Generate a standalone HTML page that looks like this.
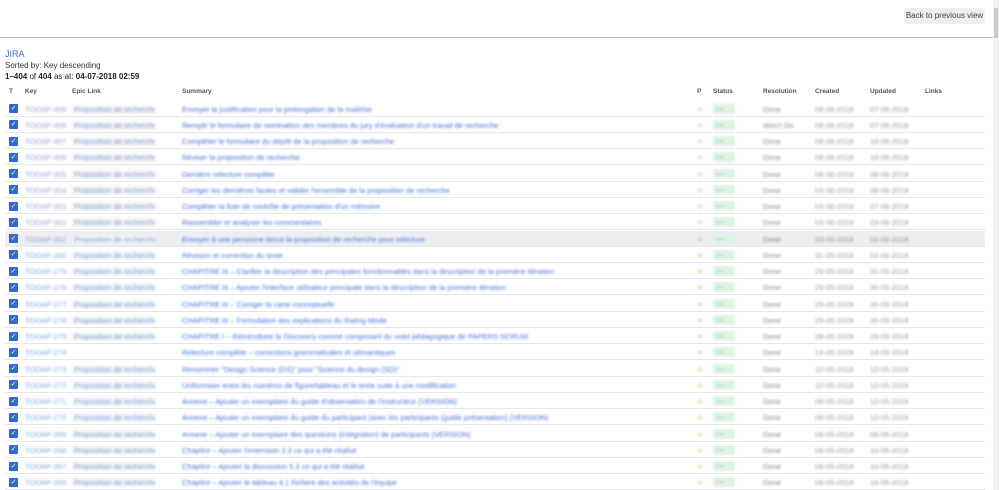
<!DOCTYPE html>
<html><head><meta charset="utf-8"><style>
*{margin:0;padding:0;box-sizing:border-box}
body{width:999px;height:490px;overflow:hidden;background:#fff;font-family:"Liberation Sans",sans-serif;position:relative}
.top{position:absolute;left:0;top:0;width:993px;height:38px;border-bottom:1px solid #b7bcc4}
.btn{position:absolute;left:904px;top:8px;width:81px;height:16px;background:#eceef1;border-radius:3px;font-size:8px;color:#344;line-height:16px;text-align:center}
.sb{position:absolute;left:993px;top:0;width:6px;height:490px;background:#f0f0f0}
.sb i{position:absolute;left:1px;top:8px;width:4px;height:30px;background:#c8c8c8}
.h1{position:absolute;left:5px;top:49px;font-size:9px;color:#3d6dc8}
.h2{position:absolute;left:5px;top:61px;font-size:8px;color:#333}
.h3{position:absolute;left:5px;top:72px;font-size:8px;color:#222}
.th{position:absolute;top:88px;font-size:6.5px;color:#555;font-weight:bold}
.row{position:absolute;left:5px;width:980px;height:16px;border-bottom:1px solid #e4e6ea;font-size:7.5px;white-space:nowrap;margin-top:1.5px}
.row.hl{background:#eceef2}
.row span{position:absolute;top:4px;filter:blur(1px)}
.cb{position:absolute;left:4px;top:3.5px;width:9px;height:9px;background:#2d6ad6;border-radius:1px;color:#fff;font-size:7px;line-height:9px;text-align:center}
.k{left:20px;color:#8aa6d8}
.e{left:67px;color:#7f9ed8;background:#f3f4f6;padding:0 2px;width:83px;overflow:hidden}
.s{left:177px;color:#4670d4}
.p{left:693px;color:#f0a060;font-weight:bold}
.st{left:708px;color:#4b8;background:#e0f2e3;padding:0 3px;width:22px;top:3px!important;height:10px}
.r{left:758px;color:#888}
.c{left:810px;color:#999}
.u{left:865px;color:#999}
</style></head><body>
<div class="top"><div class="btn">Back to previous view</div></div>
<div class="sb"><i></i></div>
<div class="h1">JIRA</div>
<div class="h2">Sorted by: Key descending</div>
<div class="h3"><b>1–404</b> of <b>404</b> as at: <b>04-07-2018 02:59</b></div>
<div class="th" style="left:9px">T</div><div class="th" style="left:25px">Key</div><div class="th" style="left:72px">Epic Link</div><div class="th" style="left:182px">Summary</div><div class="th" style="left:697px">P</div><div class="th" style="left:713px">Status</div><div class="th" style="left:763px">Resolution</div><div class="th" style="left:815px">Created</div><div class="th" style="left:870px">Updated</div><div class="th" style="left:925px">Links</div>

<div class="row" style="top:99px"><div class="cb">✓</div><span class="k">TOOAP-309</span><span class="e">Proposition de recherche</span><span class="s">Envoyer la justification pour la prolongation de la maîtrise</span><span class="p">=</span><span class="st">—</span><span class="r">Done</span><span class="c">08-06-2018</span><span class="u">07-06-2018</span></div>
<div class="row" style="top:115.3px"><div class="cb">✓</div><span class="k">TOOAP-308</span><span class="e">Proposition de recherche</span><span class="s">Remplir le formulaire de nomination des membres du jury d'évaluation d'un travail de recherche</span><span class="p">=</span><span class="st">—</span><span class="r">Won't Do</span><span class="c">08-06-2018</span><span class="u">07-06-2018</span></div>
<div class="row" style="top:131.5px"><div class="cb">✓</div><span class="k">TOOAP-307</span><span class="e">Proposition de recherche</span><span class="s">Compléter le formulaire du dépôt de la proposition de recherche</span><span class="p">=</span><span class="st">—</span><span class="r">Done</span><span class="c">08-06-2018</span><span class="u">10-06-2018</span></div>
<div class="row" style="top:147.8px"><div class="cb">✓</div><span class="k">TOOAP-306</span><span class="e">Proposition de recherche</span><span class="s">Réviser la proposition de recherche</span><span class="p">=</span><span class="st">—</span><span class="r">Done</span><span class="c">08-06-2018</span><span class="u">10-06-2018</span></div>
<div class="row" style="top:164px"><div class="cb">✓</div><span class="k">TOOAP-305</span><span class="e">Proposition de recherche</span><span class="s">Dernière relecture complète</span><span class="p">=</span><span class="st">—</span><span class="r">Done</span><span class="c">08-06-2018</span><span class="u">08-06-2018</span></div>
<div class="row" style="top:180.3px"><div class="cb">✓</div><span class="k">TOOAP-304</span><span class="e">Proposition de recherche</span><span class="s">Corriger les dernières fautes et valider l'ensemble de la proposition de recherche</span><span class="p">=</span><span class="st">—</span><span class="r">Done</span><span class="c">03-06-2018</span><span class="u">08-06-2018</span></div>
<div class="row" style="top:196.5px"><div class="cb">✓</div><span class="k">TOOAP-303</span><span class="e">Proposition de recherche</span><span class="s">Compléter la liste de contrôle de présentation d'un mémoire</span><span class="p">=</span><span class="st">—</span><span class="r">Done</span><span class="c">03-06-2018</span><span class="u">07-06-2018</span></div>
<div class="row" style="top:212.8px"><div class="cb">✓</div><span class="k">TOOAP-302</span><span class="e">Proposition de recherche</span><span class="s">Rassembler et analyser les commentaires</span><span class="p">=</span><span class="st">—</span><span class="r">Done</span><span class="c">03-06-2018</span><span class="u">03-06-2018</span></div>
<div class="row hl" style="top:229px"><div class="cb">✓</div><span class="k">TOOAP-301</span><span class="e">Proposition de recherche</span><span class="s">Envoyer à une personne tierce la proposition de recherche pour relecture</span><span class="p">=</span><span class="st">—</span><span class="r">Done</span><span class="c">03-06-2018</span><span class="u">03-06-2018</span></div>
<div class="row" style="top:245.3px"><div class="cb">✓</div><span class="k">TOOAP-300</span><span class="e">Proposition de recherche</span><span class="s">Révision et correction du texte</span><span class="p">=</span><span class="st">—</span><span class="r">Done</span><span class="c">31-05-2018</span><span class="u">03-06-2018</span></div>
<div class="row" style="top:261.5px"><div class="cb">✓</div><span class="k">TOOAP-279</span><span class="e">Proposition de recherche</span><span class="s">CHAPITRE III – Clarifier la description des principales fonctionnalités dans la description de la première itération</span><span class="p">=</span><span class="st">—</span><span class="r">Done</span><span class="c">29-05-2018</span><span class="u">31-05-2018</span></div>
<div class="row" style="top:277.8px"><div class="cb">✓</div><span class="k">TOOAP-278</span><span class="e">Proposition de recherche</span><span class="s">CHAPITRE III – Ajouter l'interface utilisateur principale dans la description de la première itération</span><span class="p">=</span><span class="st">—</span><span class="r">Done</span><span class="c">29-05-2018</span><span class="u">30-05-2018</span></div>
<div class="row" style="top:294px"><div class="cb">✓</div><span class="k">TOOAP-277</span><span class="e">Proposition de recherche</span><span class="s">CHAPITRE III – Corriger la carte conceptuelle</span><span class="p">=</span><span class="st">—</span><span class="r">Done</span><span class="c">29-05-2018</span><span class="u">30-05-2018</span></div>
<div class="row" style="top:310.3px"><div class="cb">✓</div><span class="k">TOOAP-276</span><span class="e">Proposition de recherche</span><span class="s">CHAPITRE III – Formulation des explications du Rating Mode</span><span class="p">=</span><span class="st">—</span><span class="r">Done</span><span class="c">29-05-2018</span><span class="u">30-05-2018</span></div>
<div class="row" style="top:326.5px"><div class="cb">✓</div><span class="k">TOOAP-275</span><span class="e">Proposition de recherche</span><span class="s">CHAPITRE I – Réintroduire la Discovery comme composant du volet pédagogique de PAPERS-SCRUM</span><span class="p">=</span><span class="st">—</span><span class="r">Done</span><span class="c">28-05-2018</span><span class="u">29-05-2018</span></div>
<div class="row" style="top:342.8px"><div class="cb">✓</div><span class="k">TOOAP-274</span><span class="e" style="background:none;color:#fff">.</span><span class="s">Relecture complète – corrections grammaticales et sémantiques</span><span class="p">=</span><span class="st">—</span><span class="r">Done</span><span class="c">14-05-2018</span><span class="u">14-05-2018</span></div>
<div class="row" style="top:359px"><div class="cb">✓</div><span class="k">TOOAP-273</span><span class="e">Proposition de recherche</span><span class="s">Renommer "Design Science (DS)" pour "Science du design (SD)"</span><span class="p">=</span><span class="st">—</span><span class="r">Done</span><span class="c">10-05-2018</span><span class="u">10-05-2018</span></div>
<div class="row" style="top:375.3px"><div class="cb">✓</div><span class="k">TOOAP-272</span><span class="e">Proposition de recherche</span><span class="s">Uniformiser entre les numéros de figure/tableau et le texte suite à une modification</span><span class="p">=</span><span class="st">—</span><span class="r">Done</span><span class="c">10-05-2018</span><span class="u">10-05-2018</span></div>
<div class="row" style="top:391.5px"><div class="cb">✓</div><span class="k">TOOAP-271</span><span class="e">Proposition de recherche</span><span class="s">Annexe – Ajouter un exemplaire du guide d'observation de l'instructeur (VERSION)</span><span class="p">=</span><span class="st">—</span><span class="r">Done</span><span class="c">08-05-2018</span><span class="u">10-05-2018</span></div>
<div class="row" style="top:407.8px"><div class="cb">✓</div><span class="k">TOOAP-270</span><span class="e">Proposition de recherche</span><span class="s">Annexe – Ajouter un exemplaire du guide du participant (avec les participants (guide présentation) (VERSION)</span><span class="p">=</span><span class="st">—</span><span class="r">Done</span><span class="c">08-05-2018</span><span class="u">10-05-2018</span></div>
<div class="row" style="top:424px"><div class="cb">✓</div><span class="k">TOOAP-269</span><span class="e">Proposition de recherche</span><span class="s">Annexe – Ajouter un exemplaire des questions (intégration) de participants (VERSION)</span><span class="p">=</span><span class="st">—</span><span class="r">Done</span><span class="c">08-05-2018</span><span class="u">08-05-2018</span></div>
<div class="row" style="top:440.3px"><div class="cb">✓</div><span class="k">TOOAP-268</span><span class="e">Proposition de recherche</span><span class="s">Chapitre – Ajouter l'extension 3.3 ce qui a été réalisé</span><span class="p">=</span><span class="st">—</span><span class="r">Done</span><span class="c">08-05-2018</span><span class="u">10-05-2018</span></div>
<div class="row" style="top:456.5px"><div class="cb">✓</div><span class="k">TOOAP-267</span><span class="e">Proposition de recherche</span><span class="s">Chapitre – Ajouter la discussion 5.3 ce qui a été réalisé</span><span class="p">=</span><span class="st">—</span><span class="r">Done</span><span class="c">08-05-2018</span><span class="u">10-05-2018</span></div>
<div class="row" style="top:472.8px"><div class="cb">✓</div><span class="k">TOOAP-266</span><span class="e">Proposition de recherche</span><span class="s">Chapitre – Ajouter le tableau 4.1 Refaire des activités de l'équipe</span><span class="p">=</span><span class="st">—</span><span class="r">Done</span><span class="c">08-05-2018</span><span class="u">16-05-2018</span></div>
</body></html>
